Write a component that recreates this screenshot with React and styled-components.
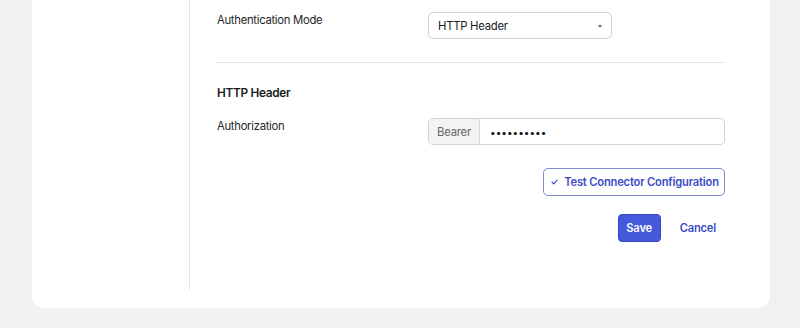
import React from "react";
import styled, { createGlobalStyle } from "styled-components";

const Global = createGlobalStyle`
  html, body { margin: 0; padding: 0; background: #f1f1f1; }
  body { font-family: Inter, "Noto Sans", sans-serif; -webkit-font-smoothing: antialiased; }
  * { box-sizing: border-box; }
`;

const Page = styled.div`
  padding: 0 30px 20px 32px;
`;

const Card = styled.div`
  background: #fff;
  border-radius: 0 0 12px 12px;
  height: 308px;
  display: flex;
  padding-bottom: 18px;
`;

const Sidebar = styled.div`
  width: 158px;
  flex-shrink: 0;
  border-right: 1.5px solid #e4e4e4;
`;

const Main = styled.div`
  flex: 1;
  padding: 12px 45px 0 27px;
  display: flex;
  flex-direction: column;
`;

const Row = styled.div`
  display: grid;
  grid-template-columns: 211px 1fr;
  align-items: start;
  margin-top: ${(p) => p.$mt || 0}px;
`;

const Label = styled.div`
  font-size: 11.3px;
  letter-spacing: -0.3px;
  line-height: 16px;
  color: #262626;
`;

const SelectBox = styled.div`
  width: 184px;
  height: 27px;
  border: 1px solid #d2d2d2;
  border-radius: 5px;
  display: flex;
  align-items: center;
  justify-content: space-between;
  padding: 0 9px 0 9px;
  font-size: 11.3px;
  letter-spacing: -0.25px;
  color: #1a1a1a;
`;

const Caret = styled.span`
  width: 0;
  height: 0;
  border-left: 2.5px solid transparent;
  border-right: 2.5px solid transparent;
  border-top: 3.5px solid #666;
  margin-top: 1px;
`;

const Divider = styled.hr`
  border: none;
  border-top: 1px solid #e5e5e5;
  margin: 23px 0 0;
`;

const Heading = styled.div`
  font-size: 11.8px;
  letter-spacing: -0.3px;
  font-weight: 600;
  line-height: 18px;
  color: #1b1b1b;
  margin-top: 21px;
`;

const InputGroup = styled.div`
  height: 27px;
  border: 1px solid #d2d2d2;
  border-radius: 5px;
  display: flex;
  overflow: hidden;
`;

const Prefix = styled.div`
  width: 51px;
  background: #f3f3f3;
  border-right: 1px solid #d8d8d8;
  display: flex;
  align-items: center;
  justify-content: center;
  font-size: 11.3px;
  letter-spacing: -0.25px;
  color: #666;
`;

const Dots = styled.div`
  flex: 1;
  display: flex;
  align-items: center;
  padding-left: 10px;
  font-size: 10px;
  color: #111;
`;

const Actions = styled.div`
  display: flex;
  justify-content: flex-end;
  align-items: center;
  gap: ${(p) => p.$gap || 0}px;
  margin-top: ${(p) => p.$mt || 0}px;
`;

const OutlineButton = styled.button`
  height: 28px;
  width: 182px;
  border: 1px solid #7f8ad0;
  border-radius: 5px;
  background: #fff;
  color: #3a4bc8;
  font-family: inherit;
  font-size: 11.2px;
  letter-spacing: -0.2px;
  font-weight: 600;
  white-space: nowrap;
  display: flex;
  align-items: center;
  justify-content: center;
  gap: 6px;
  padding: 0 0 0 2px;
`;

const PrimaryButton = styled.button`
  height: 28px;
  width: 43px;
  border: 1px solid #3447c4;
  border-radius: 4px;
  background: #4459dc;
  color: #fff;
  font-family: inherit;
  font-size: 11.2px;
  letter-spacing: -0.2px;
  font-weight: 600;
  padding: 0;
`;

const TextButton = styled.button`
  height: 28px;
  border: none;
  background: none;
  color: #3a4bc8;
  font-family: inherit;
  font-size: 11.2px;
  letter-spacing: -0.2px;
  font-weight: 600;
  padding: 0 9px;
`;

const Check = () => (
  <svg width="7" height="6" viewBox="0 0 7 6" fill="none">
    <path d="M1 3.2L2.8 4.8L6 1.2" stroke="#3a4bc8" strokeWidth="1.2" strokeLinecap="round" strokeLinejoin="round" />
  </svg>
);

export default function App() {
  return (
    <>
      <Global />
      <Page>
        <Card>
          <Sidebar />
          <Main>
            <Row>
              <Label>Authentication Mode</Label>
              <SelectBox>
                <span>HTTP Header</span>
                <Caret />
              </SelectBox>
            </Row>
            <Divider />
            <Heading>HTTP Header</Heading>
            <Row $mt={16}>
              <Label>Authorization</Label>
              <InputGroup>
                <Prefix>Bearer</Prefix>
                <Dots>••••••••••</Dots>
              </InputGroup>
            </Row>
            <Actions $mt={23}>
              <OutlineButton>
                <Check />
                Test Connector Configuration
              </OutlineButton>
            </Actions>
            <Actions $mt={18} $gap={10}>
              <PrimaryButton>Save</PrimaryButton>
              <TextButton>Cancel</TextButton>
            </Actions>
          </Main>
        </Card>
      </Page>
    </>
  );
}
